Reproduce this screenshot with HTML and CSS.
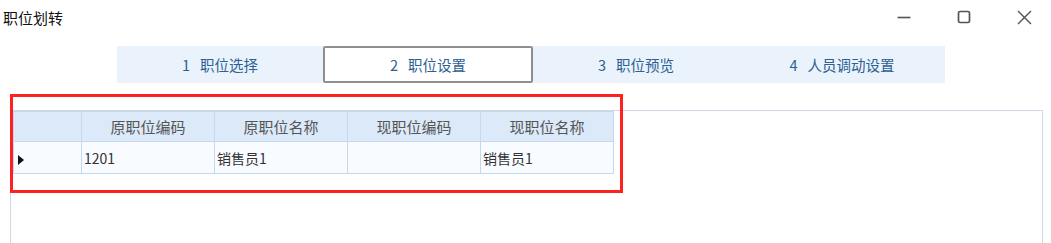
FILE: index.html
```html
<!DOCTYPE html>
<html lang="zh-CN">

<head>
    <meta charset="UTF-8">
    <meta name="viewport" content="width=device-width, initial-scale=1.0">
    <title>职位划转</title>
    <link rel="stylesheet" href="styles.css">
</head>

<body>
    <div class="window">
        <!-- 标题栏 -->
        <div class="titlebar">
            <span class="title">职位划转</span>
            <div class="controls">
                <span class="ctrl">
                    <svg width="14" height="14" viewBox="0 0 14 14"><path d="M0.5 7.5h13" stroke="#555" stroke-width="1.6"/></svg>
                </span>
                <span class="ctrl">
                    <svg width="14" height="14" viewBox="0 0 14 14"><rect x="1.5" y="1.5" width="11" height="11" rx="1.5" fill="none" stroke="#555" stroke-width="1.7"/></svg>
                </span>
                <span class="ctrl">
                    <svg width="15" height="15" viewBox="0 0 15 15"><path d="M1 1l13 13M14 1l-13 13" stroke="#555" stroke-width="1.4"/></svg>
                </span>
            </div>
        </div>

        <!-- 步骤标签 -->
        <div class="steps">
            <div class="step"><span class="num">1</span>职位选择</div>
            <div class="step active"><span class="num">2</span>职位设置</div>
            <div class="step"><span class="num">3</span>职位预览</div>
            <div class="step"><span class="num">4</span>人员调动设置</div>
        </div>

        <!-- 内容区 -->
        <div class="panel">
            <table class="grid">
                <colgroup>
                    <col class="c-head">
                    <col class="c-data">
                    <col class="c-data">
                    <col class="c-data">
                    <col class="c-data">
                </colgroup>
                <thead>
                    <tr>
                        <th></th>
                        <th>原职位编码</th>
                        <th>原职位名称</th>
                        <th>现职位编码</th>
                        <th>现职位名称</th>
                    </tr>
                </thead>
                <tbody>
                    <tr>
                        <td class="rowhead"><span class="arrow"></span></td>
                        <td>1201</td>
                        <td>销售员1</td>
                        <td></td>
                        <td>销售员1</td>
                    </tr>
                </tbody>
            </table>
        </div>

        <!-- 红框标注 -->
        <div class="mark"></div>
    </div>
</body>

</html>
```

FILE: styles.css
```css
html,
body {
    margin: 0;
    padding: 0;
    background-color: #fff;
}

body {
    font-family: "Noto Sans CJK SC", "Noto Sans", sans-serif;
    font-size: 14px;
    color: #222;
}

.window {
    position: relative;
    width: 1051px;
    height: 243px;
    overflow: hidden;
}

.titlebar {
    display: flex;
    align-items: center;
    justify-content: space-between;
    height: 36px;
    padding-left: 3px;
}

.title {
    font-size: 15px;
    color: #111;
    line-height: 1;
    margin-top: -2px;
}

.controls {
    display: flex;
    align-items: center;
    gap: 6px;
    margin-top: -2px;
}

.ctrl {
    display: flex;
    width: 54px;
    justify-content: center;
}

.steps {
    display: flex;
    margin: 10px 0 0 117px;
    width: 828px;
    height: 37px;
}

.step {
    flex: 1;
    display: flex;
    align-items: center;
    justify-content: center;
    background-color: #eaf3fc;
    color: #2c5f93;
    font-size: 14.5px;
}

.step .num {
    margin-right: 10px;
}

.step.active {
    background-color: #fff;
    border: 2px solid #8f8f8f;
    border-radius: 2px;
    box-sizing: border-box;
}

.panel {
    margin: 27px 8px 0 10px;
    height: 140px;
    border: 1px solid #cdd9e5;
    border-bottom: none;
    padding: 0 2px;
}

.grid {
    border-collapse: collapse;
    table-layout: fixed;
    width: 601px;
}

.grid .c-head {
    width: 68px;
}

.grid .c-data {
    width: 133px;
}

.grid th,
.grid td {
    border: 1px solid #c5d8ee;
    overflow: hidden;
    white-space: nowrap;
}

.grid th {
    height: 29px;
    padding: 0;
    background-color: #dce9f9;
    font-weight: normal;
    color: #555;
    font-size: 15px;
    text-align: center;
}

.grid td {
    height: 31px;
    padding: 0 2px;
    background-color: #f8fbff;
    color: #333;
    font-size: 14px;
}

.grid td.rowhead {
    padding: 0 0 0 4px;
}

.arrow {
    display: inline-block;
    width: 0;
    height: 0;
    border-top: 5px solid transparent;
    border-bottom: 5px solid transparent;
    border-left: 6px solid #111;
    vertical-align: middle;
}

/* 截图上的红色标注框 */
.mark {
    position: absolute;
    left: 10px;
    top: 94px;
    width: 607px;
    height: 93px;
    border: 3px solid #ff2020;
}
```
